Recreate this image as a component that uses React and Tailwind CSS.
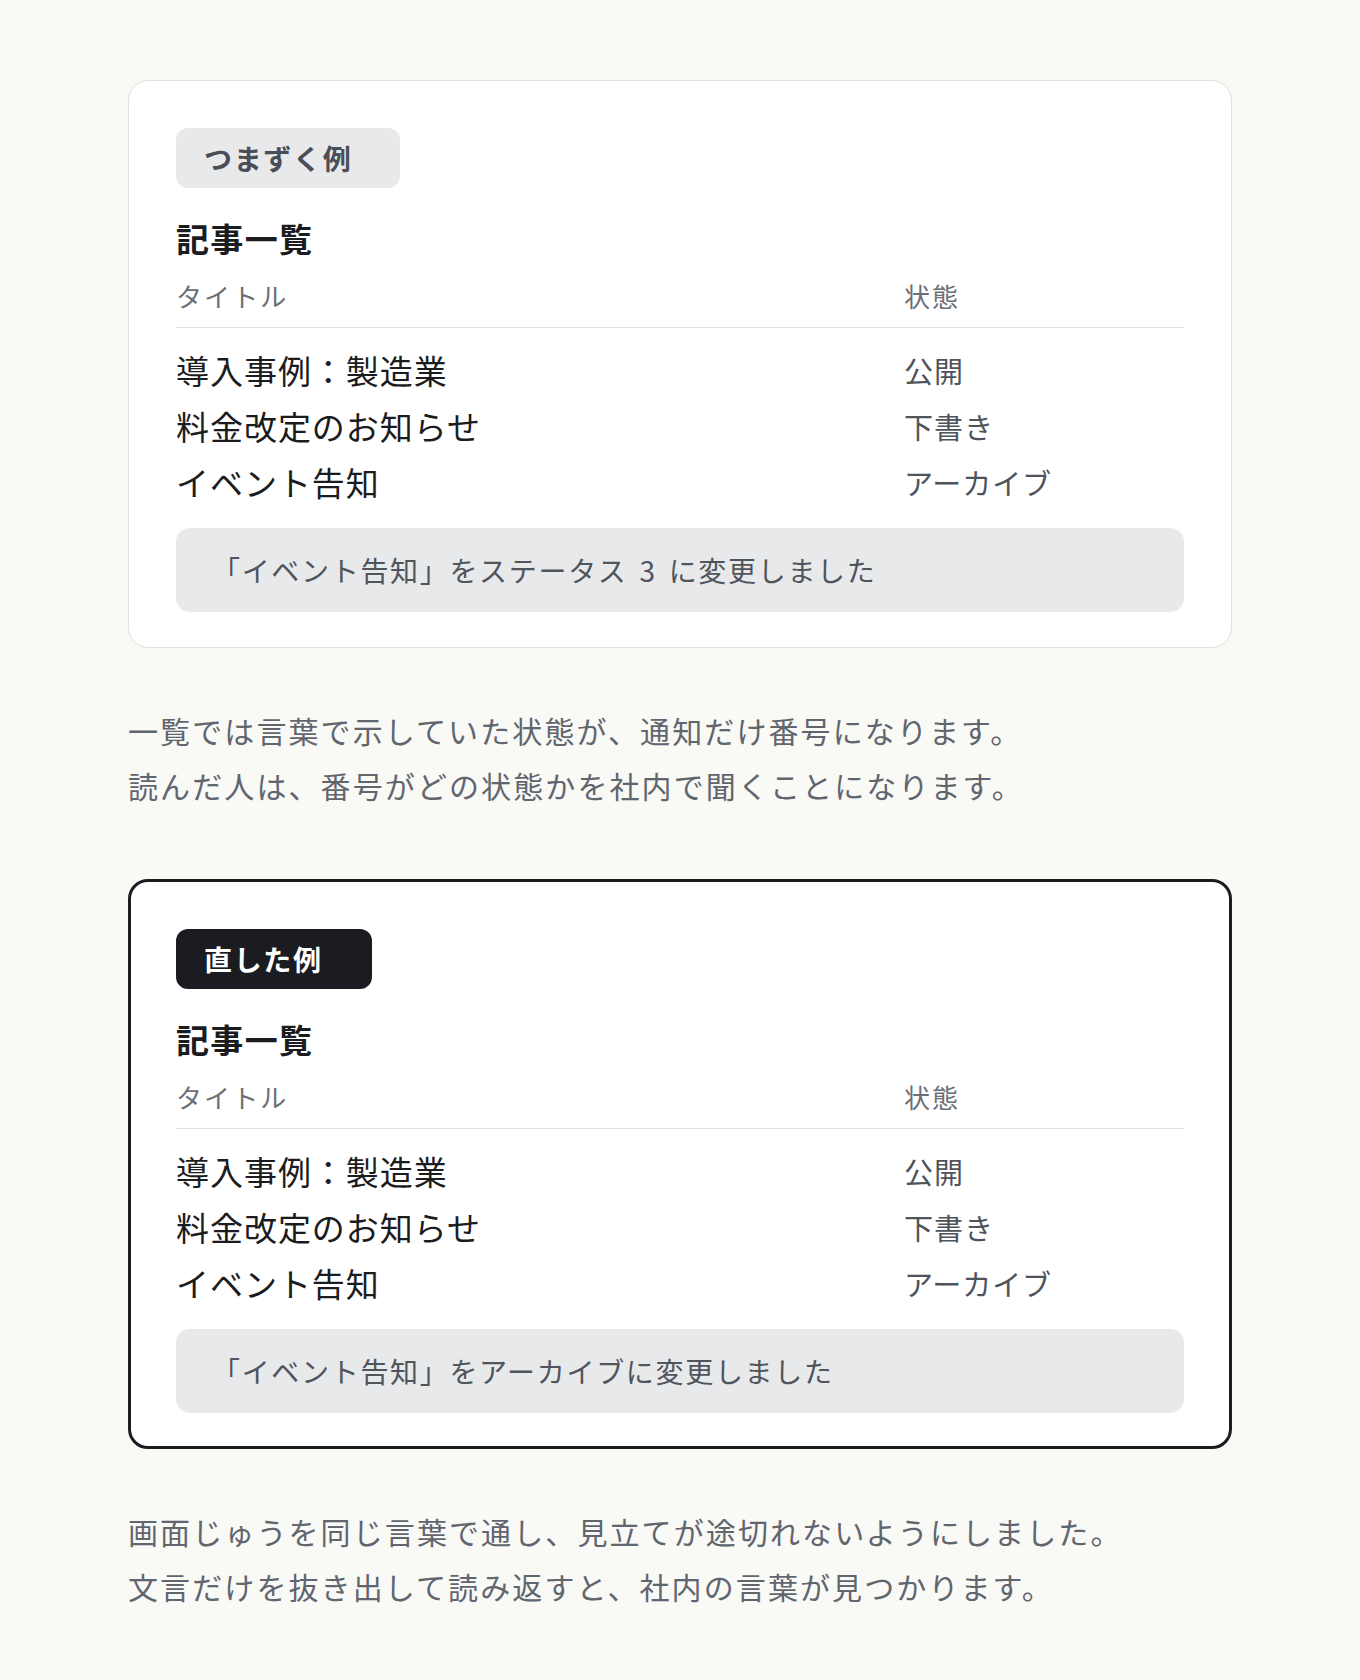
import React from "react";

const rows = [
  ["導入事例：製造業", "公開"],
  ["料金改定のお知らせ", "下書き"],
  ["イベント告知", "アーカイブ"],
];

function ArticleList({ notice }) {
  return (
    <>
      <h2 className="mt-[26px] text-[33px] font-bold leading-[48px] tracking-[0.04em] text-[#1b1c20]">
        記事一覧
      </h2>
      <div className="mt-[14px] grid grid-cols-[1fr_280px] border-b border-[#e2e2da] pb-[11px] text-[26px] leading-[40px] tracking-[0.08em] text-[#6b6f78]">
        <span>タイトル</span>
        <span>状態</span>
      </div>
      <ul className="mt-[14px]">
        {rows.map(([title, status]) => (
          <li key={title} className="grid h-[56px] grid-cols-[1fr_280px] items-center tracking-[0.06em]">
            <span className="text-[33px] leading-[56px] text-[#1b1c20]">{title}</span>
            <span className="text-[29px] leading-[56px] text-[#4f535b]">{status}</span>
          </li>
        ))}
      </ul>
      <div className="mt-[18px] flex h-[84px] items-center rounded-[14px] bg-[#e8e9eb] px-[36px] text-[28px] tracking-[0.06em] text-[#50545c]">
        <p>{notice}</p>
      </div>
    </>
  );
}

export default function App() {
  return (
    <div className="min-h-screen bg-[#f9f9f5] pt-[80px] pb-[67px] font-['Noto_Sans_CJK_JP','Noto_Sans',sans-serif]">
      <div className="mx-auto w-[1104px]">
        <section>
          <div className="rounded-[20px] border border-[#e2e2da] bg-white px-[47px] pt-[47px] pb-[35px]">
            <span className="inline-flex h-[60px] items-center rounded-[12px] bg-[#e8e9eb] pl-[28px] pr-[48px] text-[28px] font-bold tracking-[0.06em] text-[#4a4e56]">
              つまずく例
            </span>
            <ArticleList
              notice={
                <>
                  「イベント告知」をステータス <span className="mx-[4px]">3</span> に変更しました
                </>
              }
            />
          </div>
          <p className="mt-[55px] text-[30px] leading-[55px] tracking-[0.07em] text-[#61656e]">
            一覧では言葉で示していた状態が、通知だけ番号になります。
            <br />
            読んだ人は、番号がどの状態かを社内で聞くことになります。
          </p>
        </section>

        <section className="mt-[66px]">
          <div className="rounded-[20px] border-[3px] border-[#1b1c21] bg-white px-[45px] pt-[47px] pb-[33px]">
            <span className="inline-flex h-[60px] items-center rounded-[12px] bg-[#1b1c21] pl-[28px] pr-[49px] text-[28px] font-bold tracking-[0.06em] text-white">
              直した例
            </span>
            <ArticleList notice="「イベント告知」をアーカイブに変更しました" />
          </div>
          <p className="mt-[55px] text-[30px] leading-[55px] tracking-[0.07em] text-[#61656e]">
            画面じゅうを同じ言葉で通し、見立てが途切れないようにしました。
            <br />
            文言だけを抜き出して読み返すと、社内の言葉が見つかります。
          </p>
        </section>
      </div>
    </div>
  );
}
